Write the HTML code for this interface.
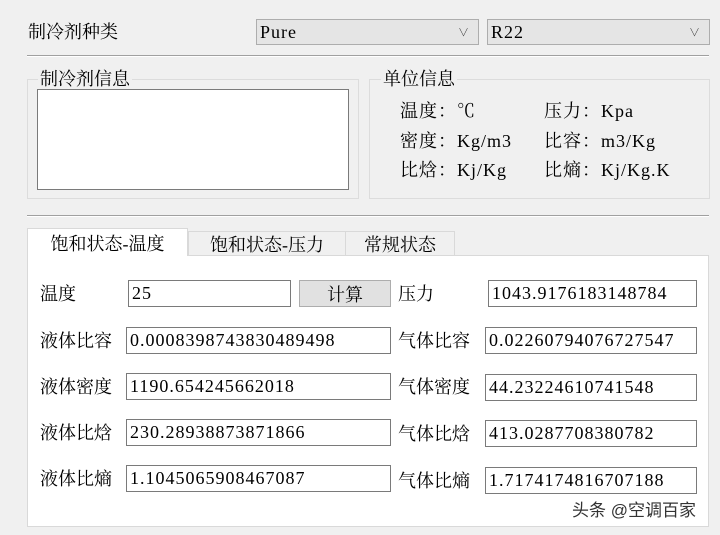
<!DOCTYPE html><html><head><meta charset="utf-8"><style>
body{margin:0;width:720px;height:535px;background:#f0f0f0;position:relative;overflow:hidden;font-family:"Liberation Serif","Noto Serif CJK SC",serif;font-size:18px;color:#000}
.a{position:absolute;white-space:nowrap;line-height:1}
.box{position:absolute;background:#fff;border:1px solid #7a7a7a;box-sizing:border-box;font-size:18px;padding-left:3px;display:flex;align-items:center;white-space:nowrap;overflow:hidden;letter-spacing:1px}
.cb{position:absolute;background:#e5e5e5;border:1px solid #adadad;box-sizing:border-box;display:flex;align-items:center;padding-left:3px;letter-spacing:1px}
.cb span{position:absolute;right:8px;font-size:11px;color:#333}
.hr{position:absolute;left:27px;width:682px;height:1px;background:#a0a0a0;border-bottom:1px solid #fff}
.grp{position:absolute;border:1px solid #dcdcdc;box-sizing:border-box}
.gl{position:absolute;background:#f0f0f0;padding:0 2px;line-height:1}
.tab{position:absolute;top:231px;height:24px;border:1px solid #d9d9d9;border-bottom:none;box-sizing:border-box;display:flex;align-items:center;justify-content:center;background:#f0f0f0}
.u{letter-spacing:1px}
</style></head><body>
<div class="a" style="left:28px;top:23px">制冷剂种类</div>
<div class="cb" style="left:256px;top:19px;width:223px;height:26px">Pure<span>∨</span></div>
<div class="cb" style="left:487px;top:19px;width:223px;height:26px">R22<span>∨</span></div>
<div class="hr" style="top:55px"></div>
<div class="grp" style="left:27px;top:79px;width:332px;height:120px"></div>
<div class="gl" style="left:38px;top:70px">制冷剂信息</div>
<div class="box" style="left:37px;top:89px;width:312px;height:101px"></div>
<div class="grp" style="left:369px;top:79px;width:341px;height:120px"></div>
<div class="gl" style="left:381px;top:70px">单位信息</div>
<div class="a u" style="left:400px;top:102px">温度：℃</div>
<div class="a u" style="left:544px;top:102px">压力：Kpa</div>
<div class="a u" style="left:400px;top:132px">密度：Kg/m3</div>
<div class="a u" style="left:544px;top:132px">比容：m3/Kg</div>
<div class="a u" style="left:400px;top:161px">比焓：Kj/Kg</div>
<div class="a u" style="left:544px;top:161px">比熵：Kj/Kg.K</div>
<div class="hr" style="top:215px"></div>
<div style="position:absolute;left:27px;top:255px;width:682px;height:272px;background:#fff;border:1px solid #d9d9d9;box-sizing:border-box"></div>
<div class="tab" style="left:27px;top:228px;height:28px;width:161px;background:#fff;z-index:2">饱和状态-温度</div>
<div class="tab" style="left:188px;width:158px">饱和状态-压力</div>
<div class="tab" style="left:345px;width:110px">常规状态</div>
<div class="a" style="left:40px;top:285px">温度</div>
<div class="box" style="left:128px;top:280px;width:163px;height:27px">25</div>
<div style="position:absolute;left:299px;top:280px;width:92px;height:27px;background:#e1e1e1;border:1px solid #adadad;box-sizing:border-box;display:flex;align-items:center;justify-content:center">计算</div>
<div class="a" style="left:398px;top:285px">压力</div>
<div class="box" style="left:488px;top:280px;width:209px;height:27px">1043.9176183148784</div>

<div class="a" style="left:40px;top:332px">液体比容</div>
<div class="box" style="left:126px;top:327px;width:265px;height:27px">0.0008398743830489498</div>
<div class="a" style="left:398px;top:332px">气体比容</div>
<div class="box" style="left:485px;top:327px;width:212px;height:27px">0.02260794076727547</div>

<div class="a" style="left:40px;top:378px">液体密度</div>
<div class="box" style="left:126px;top:373px;width:265px;height:27px">1190.654245662018</div>
<div class="a" style="left:398px;top:378px">气体密度</div>
<div class="box" style="left:485px;top:374px;width:212px;height:27px">44.23224610741548</div>

<div class="a" style="left:40px;top:424px">液体比焓</div>
<div class="box" style="left:126px;top:419px;width:265px;height:27px">230.28938873871866</div>
<div class="a" style="left:398px;top:425px">气体比焓</div>
<div class="box" style="left:485px;top:420px;width:212px;height:27px">413.0287708380782</div>

<div class="a" style="left:40px;top:470px">液体比熵</div>
<div class="box" style="left:126px;top:465px;width:265px;height:27px">1.1045065908467087</div>
<div class="a" style="left:398px;top:472px">气体比熵</div>
<div class="box" style="left:485px;top:467px;width:212px;height:27px">1.7174174816707188</div>
<div class="a" style="left:572px;top:502px;font-family:'Liberation Sans','Noto Sans CJK SC',sans-serif;font-size:17px;color:#333">头条 @空调百家</div>
</body></html>
